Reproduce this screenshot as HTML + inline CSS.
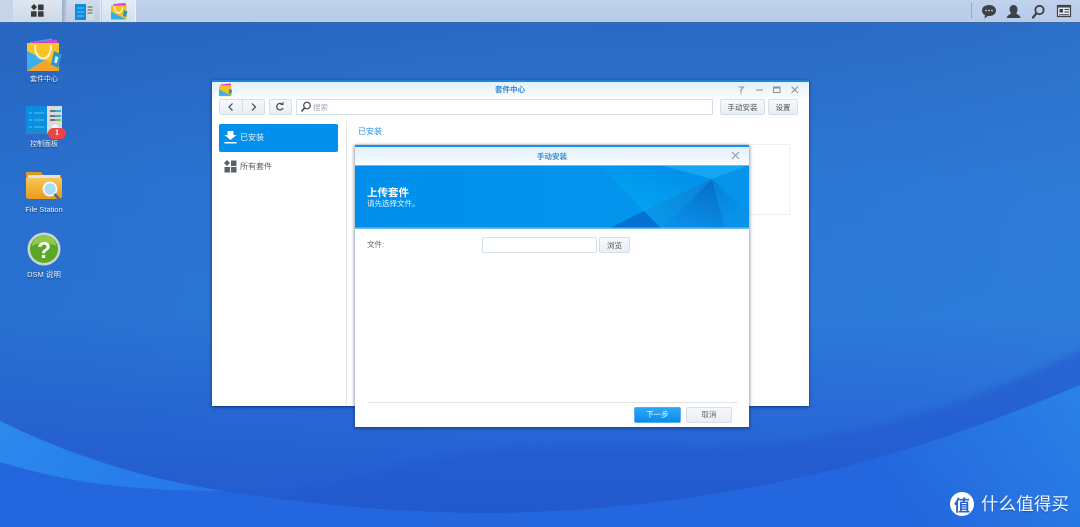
<!DOCTYPE html>
<html lang="zh"><head><meta charset="utf-8"><title>套件中心</title>
<style>
*{box-sizing:border-box}
html,body{margin:0;padding:0;width:1080px;height:527px;overflow:hidden}
body{position:relative;font-family:"Liberation Sans","Noto Sans CJK SC",sans-serif;background:#2a72d2}
.a{position:absolute}
.t{position:absolute;white-space:nowrap;line-height:1}
.c{text-align:center}
.lab{color:#eef5ff;font-size:7px;text-align:center;width:70px;left:9px;text-shadow:0 1px 1px rgba(0,30,90,.7);filter:blur(.25px)}
.btn{position:absolute;border:1px solid #d6dfe8;border-radius:2px;background:linear-gradient(#f6f9fc,#e8eef4);color:#555;font-size:7.5px;text-align:center}
.ic{filter:blur(.3px)}
</style></head><body>
<svg class="a" style="left:0;top:0" width="1080" height="527" viewBox="0 0 1080 527">
<defs>
<linearGradient id="bg" x1="0" y1="0" x2="0" y2="527" gradientUnits="userSpaceOnUse">
<stop offset="0" stop-color="#2a68c0"/><stop offset=".35" stop-color="#2c78d6"/><stop offset=".6" stop-color="#2c7ada"/><stop offset=".8" stop-color="#2868d8"/><stop offset="1" stop-color="#2258d0"/>
</linearGradient>
<linearGradient id="bgx" x1="0" y1="0" x2="1" y2="0">
<stop offset="0" stop-color="#1f58b8" stop-opacity=".28"/><stop offset=".5" stop-color="#1f58b8" stop-opacity="0"/><stop offset="1" stop-color="#3a90e0" stop-opacity=".15"/>
</linearGradient>
<linearGradient id="w1" x1="0" y1="430" x2="224" y2="490" gradientUnits="userSpaceOnUse"><stop offset="0" stop-color="#2b88ec"/><stop offset="1" stop-color="#2476ea"/></linearGradient>
<linearGradient id="w2" x1="1080" y1="385" x2="900" y2="510" gradientUnits="userSpaceOnUse"><stop offset="0" stop-color="#2a82e6"/><stop offset="1" stop-color="#2366de"/></linearGradient>
<filter id="sf" x="-5%" y="-20%" width="110%" height="140%"><feGaussianBlur stdDeviation="3"/></filter>
</defs>
<rect width="1080" height="527" fill="url(#bg)"/>
<rect width="1080" height="527" fill="url(#bgx)"/>
<path d="M300 492C360 478 440 452 517 447C640 445 740 452 815 438C890 425 990 397 1090 345V400L900 470L600 520H300Z" fill="#2358ce" opacity=".55" filter="url(#sf)"/>
<path d="M0 421C70 455 140 478 224 491C310 505 410 513 490 513C760 510 950 440 1080 385V527H0Z" fill="url(#w2)"/>
<path d="M0 421C70 455 140 478 224 491C120 491 60 480 0 462Z" fill="url(#w1)"/>
</svg>

<!-- taskbar -->
<div class="a" style="left:0;top:0;width:1080px;height:23px;background:linear-gradient(#c0d2ec,#b7cbe8);border-bottom:1px solid #3a6cab"></div>
<div class="a" style="left:0;top:0;width:13px;height:22px;background:#c6d4e8"></div>
<div class="a" style="left:13px;top:0;width:49px;height:22px;background:linear-gradient(#dfe6f0,#ccd8e9)"></div>
<div class="a" style="left:62px;top:0;width:5px;height:22px;background:linear-gradient(90deg,#97aac4,#c0d0e6)"></div>
<div class="a" style="left:67px;top:0;width:34px;height:22px;background:linear-gradient(#cfdcee,#bccde6);border-right:1px solid #e4ecf6"></div>
<div class="a" style="left:102px;top:0;width:34px;height:22px;background:linear-gradient(#e4ecf6,#d3dff0);border-right:1px solid #eef3fa"></div>
<svg class="a ic" style="left:30px;top:4px" width="15" height="14" viewBox="0 0 15 14"><path d="M4 0L7 3L4 6.200L1 3Z" fill="#333"/><rect x="8" y=".5" width="5.600" height="5.600" rx=".6" fill="#3a3a3a"/><rect x="1" y="7.200" width="5.600" height="5.600" rx=".6" fill="#3a3a3a"/><rect x="8" y="7.200" width="5.600" height="5.600" rx=".6" fill="#3a3a3a"/></svg>
<svg class="a ic" style="left:75px;top:4px" width="19" height="16" viewBox="0 0 19 16"><rect width="11" height="16" fill="#0a8fe0"/><rect x="11" width="8" height="16" fill="#d3dade"/><path d="M2 4h7M2 8h7M2 12h7" stroke="#6cc4f2"/><path d="M12.500 3h5M12.500 6h5M12.500 9h5" stroke="#49606c"/></svg>
<svg class="a ic" style="left:110px;top:3px" width="19" height="17" viewBox="0 0 36 34"><path d="M6 2L30 0L32 8H5Z" fill="#d93fd0"/><rect x="1" y="5" width="31" height="28" fill="#f4c21f"/><path d="M1 17L32 33H1Z" fill="#35aee8"/><path d="M8 7C8 24 24 24 24 7" fill="none" stroke="#fbeecb" stroke-width="2.500"/><path d="M27 14l7 3 -3 11 -6-2Z" fill="#2b93c9"/></svg>
<div class="a" style="left:971px;top:3px;width:1px;height:16px;background:#93a9c6"></div>
<svg class="a ic" style="left:981px;top:4px" width="92" height="15" viewBox="0 0 92 15">
<path d="M8 1C12.500 1 15 3.500 15 6.500S12.500 12 8 12L6.800 12L3.500 14.500L4 11.300C2 10.300 1 8.500 1 6.500C1 3.500 3.500 1 8 1Z" fill="#3c4247"/><circle cx="5" cy="6.500" r=".9" fill="#c0d2ec"/><circle cx="8" cy="6.500" r=".9" fill="#c0d2ec"/><circle cx="11" cy="6.500" r=".9" fill="#c0d2ec"/>
<path d="M32.500 1C35 1 36.500 3 36.500 5.500C36.500 7.500 35.500 8.500 35.500 9.500C35.500 10.500 39 10.800 39.500 13.500V14H25.800V13.500C26.300 10.800 29.800 10.500 29.800 9.500C29.800 8.500 28.600 7.500 28.600 5.500C28.600 3 30 1 32.500 1Z" fill="#3c4247"/>
<circle cx="58.500" cy="6" r="4.200" fill="none" stroke="#3c4247" stroke-width="1.800"/><path d="M55.300 9.500L52 13.500" stroke="#3c4247" stroke-width="2.200" stroke-linecap="round"/>
<rect x="76.500" y="1.500" width="13" height="11" fill="#e2e9f2" stroke="#3c4247" stroke-width="1.200"/><rect x="76.500" y="1.500" width="13" height="2" fill="#3c4247"/><rect x="78.500" y="5" width="3.500" height="3.500" fill="#3c4247"/><path d="M83.500 5.500h4.500M83.500 8h4.500M78 10.800h10" stroke="#3c4247" stroke-width="1"/>
</svg>

<!-- desktop icons -->
<svg class="a ic" style="left:27px;top:37px" width="36" height="35" viewBox="0 0 36 35">
<path d="M3 5L25 1.500L26 6H3Z" fill="#33b6de"/><path d="M5 5L30 2.500L31 7H5Z" fill="#de3bd6"/>
<rect x="0" y="6" width="32" height="28" fill="#f6c521"/><path d="M0 14L32 30V34H0Z" fill="#40aeea"/><path d="M0 34H32V30L18 23Z" fill="#f2a52a"/>
<path d="M8 8C7.500 26 24.500 26 24 8" fill="none" stroke="#fbeccb" stroke-width="2.200"/>
<path d="M27 14L35 17.500L31 31L24 27.500Z" fill="#2b95cc"/><path d="M28.500 19L31.500 20.300L29.500 26.500L27.200 25.400Z" fill="#d9eef8"/>
</svg>
<div class="t lab" style="top:75.500px">套件中心</div>
<svg class="a ic" style="left:26px;top:105px" width="37" height="31" viewBox="0 0 37 31">
<rect x="0" y="1" width="36" height="28" fill="#d6dbdf"/><rect x="0" y="1" width="21" height="28" fill="#0a8fe0"/><rect y="27" width="36" height="2" fill="#5b7b92" opacity=".6"/>
<path d="M3 8h3M8 8h10M3 15h3M8 15h10M3 22h3M8 22h10" stroke="#5cc3f3"/><path d="M24 6h5M24 11h5M24 15h5" stroke="#45565f" stroke-width="1.500"/><path d="M29 6h6M29 11h6" stroke="#20b4ee" stroke-width="2"/><path d="M29 15h6" stroke="#7ac143" stroke-width="2"/><circle cx="29" cy="23" r="3.500" fill="#f7f7f7"/>
</svg>
<div class="a" style="left:48px;top:128px;width:18px;height:10.500px;border-radius:6px;background:#ee4445;color:#fff;font:bold 8px/10.500px 'Liberation Serif',serif;text-align:center">1</div>
<div class="t lab" style="top:141px">控制面板</div>
<svg class="a ic" style="left:25px;top:170px" width="38" height="32" viewBox="0 0 38 32">
<defs><linearGradient id="fo" x1="0" y1="0" x2="0" y2="1"><stop offset="0" stop-color="#f8c655"/><stop offset="1" stop-color="#e79a1f"/></linearGradient></defs>
<path d="M1 2H16L18 5H36V27H1Z" fill="#d89a20"/><rect x="3" y="5" width="32" height="3" fill="#dfe5e6"/>
<path d="M1 8H37V26Q37 29 34 29H4Q1 29 1 26Z" fill="url(#fo)"/><circle cx="25" cy="19" r="6.500" fill="#a6dcfa" stroke="#f4f8fb" stroke-width="1.800"/><path d="M29.500 24L35 30" stroke="#2f6f99" stroke-width="2.400"/>
</svg>
<div class="t lab" style="top:206px;font-size:7.500px">File Station</div>
<svg class="a ic" style="left:27px;top:232px" width="34" height="34" viewBox="0 0 34 34">
<circle cx="17" cy="17" r="16.500" fill="#ccd5d0"/><circle cx="17" cy="17" r="14" fill="#5ba829"/><path d="M5 14A12 11 0 0 1 29 14C22 10 12 10 5 14Z" fill="#8ecb4c"/>
<text x="17" y="26" text-anchor="middle" font-family="Liberation Sans" font-weight="bold" font-size="23" fill="#fff">?</text>
</svg>
<div class="t lab" style="top:271px;font-size:7.500px">DSM 说明</div>

<!-- main window -->
<div class="a" style="left:212px;top:80px;width:597px;height:326px;background:#fff;border-top:2px solid #1d84d8;box-shadow:0 1px 3px rgba(0,20,70,.65)"></div>
<div class="a" style="left:212px;top:82px;width:597px;height:17px;background:linear-gradient(#e2f0fb,#fafcfe)"></div>
<svg class="a ic" style="left:219px;top:83px" width="14" height="14" viewBox="0 0 36 34"><path d="M5 3L30 0L31 8H5Z" fill="#d93fd0"/><rect x="0" y="5" width="32" height="28" fill="#f4c21f"/><path d="M0 15L32 32H0Z" fill="#3caeea"/><path d="M26 14l8 3-3 12-6-3Z" fill="#2b93c9"/></svg>
<div class="t c" style="left:460px;top:86px;width:100px;font-size:7.500px;font-weight:bold;color:#2a86d6">套件中心</div>
<svg class="a ic" style="left:736px;top:84px" width="66" height="12" viewBox="0 0 66 12" fill="none" stroke="#8b949b" stroke-width="1.100"><path d="M2.500 3H7.500L5 6V8.500M5 9.500V10.500"/><path d="M20 6H27"/><rect x="37.500" y="3" width="6.500" height="5.500"/><path d="M37.500 4H44"/><path d="M55.500 2.500L62 9M62 2.500L55.500 9"/></svg>
<!-- toolbar -->
<div class="btn" style="left:219px;top:99px;width:46px;height:16px"></div>
<div class="a" style="left:242px;top:100px;width:1px;height:14px;background:#d6dfe8"></div>
<div class="btn" style="left:269px;top:99px;width:23px;height:16px"></div>
<svg class="a ic" style="left:219px;top:99px" width="74" height="16" viewBox="0 0 74 16" fill="none" stroke="#444" stroke-width="1.200"><path d="M13.500 4.500L10 8L13.500 11.500M33 4.500L36.500 8L33 11.500"/><path d="M63.500 5.500A3.300 3.300 0 1 0 64 9"/><path d="M61.500 5.500H64V3" stroke-width="1"/></svg>
<div class="a" style="left:296px;top:99px;width:417px;height:16px;border:1px solid #d6dfe8;background:#fff;border-radius:1px"></div>
<svg class="a ic" style="left:300px;top:101px" width="12" height="12" viewBox="0 0 12 12" fill="none" stroke="#444"><circle cx="7" cy="4.500" r="3.300" stroke-width="1.200"/><path d="M4.500 7L1.500 10.500" stroke-width="1.600"/></svg>
<div class="t" style="left:313px;top:103.500px;font-size:7.500px;color:#a5acb3">搜索</div>
<div class="btn" style="left:720px;top:99px;width:45px;height:16px;line-height:15px">手动安装</div>
<div class="btn" style="left:768px;top:99px;width:30px;height:16px;line-height:15px">设置</div>
<!-- sidebar -->
<div class="a" style="left:346px;top:121px;width:1px;height:284px;background:#e4e7ea"></div>
<div class="a" style="left:219px;top:124px;width:119px;height:28px;border-radius:2px;background:#0290ec"></div>
<svg class="a ic" style="left:224px;top:131px" width="13" height="14" viewBox="0 0 13 14" fill="#fff"><path d="M3.500 0H9.500V4H12.500L6.500 9L.5 4H3.500Z"/><rect x=".5" y="11" width="12" height="1.500"/></svg>
<div class="t" style="left:240px;top:134px;font-size:8px;color:#e8f5fe">已安装</div>
<svg class="a ic" style="left:224px;top:160px" width="13" height="13" viewBox="0 0 13 13" fill="#58626a"><path d="M3 0L6 3L3 6L0 3Z"/><rect x="7" y=".5" width="5.500" height="5.500"/><rect x=".5" y="7" width="5.500" height="5.500"/><rect x="7" y="7" width="5.500" height="5.500"/></svg>
<div class="t" style="left:240px;top:162.500px;font-size:8px;color:#555e66">所有套件</div>
<div class="t" style="left:358px;top:127.500px;font-size:8px;color:#2a8fe0">已安装</div>
<div class="a" style="left:355px;top:144px;width:435px;height:71px;border:1px solid #eef0f2"></div>

<!-- dialog -->
<div class="a" style="left:355px;top:145px;width:394px;height:282px;background:#fff;border-top:2px solid #1a90ea;box-shadow:0 1px 3px 1px rgba(10,30,70,.42)"></div>
<div class="a" style="left:355px;top:147px;width:394px;height:18px;background:linear-gradient(#e0effb,#fafcfe)"></div>
<div class="t c" style="left:502px;top:152.500px;width:100px;font-size:7.500px;font-weight:bold;color:#3a8fd2">手动安装</div>
<svg class="a" style="left:731px;top:151px" width="9" height="9" viewBox="0 0 9 9"><path d="M1 1L8 8M8 1L1 8" stroke="#8d969d" stroke-width="1"/></svg>
<svg class="a" style="left:355px;top:165px" width="394" height="64" viewBox="355 165 394 64">
<defs>
<linearGradient id="b1" x1="0" y1="0" x2="1" y2="0"><stop offset="0" stop-color="#018eec"/><stop offset="1" stop-color="#0298ee"/></linearGradient>
<linearGradient id="b2" x1="660" y1="165" x2="644" y2="211" gradientUnits="userSpaceOnUse"><stop offset="0" stop-color="#0190ec"/><stop offset="1" stop-color="#02a4ee"/></linearGradient>
<linearGradient id="b3" x1="712" y1="179" x2="694" y2="229" gradientUnits="userSpaceOnUse"><stop offset="0" stop-color="#056ec6"/><stop offset="1" stop-color="#0a8ee6"/></linearGradient>
<linearGradient id="b4" x1="712" y1="179" x2="740" y2="222" gradientUnits="userSpaceOnUse"><stop offset="0" stop-color="#0680d8"/><stop offset="1" stop-color="#0a94ec"/></linearGradient>
<linearGradient id="b5" x1="712" y1="179" x2="650" y2="220" gradientUnits="userSpaceOnUse"><stop offset="0" stop-color="#0a80d6"/><stop offset="1" stop-color="#0a98e8"/></linearGradient>
</defs>
<rect x="355" y="165" width="394" height="64" fill="url(#b1)"/>
<path d="M600 165H660L712 179L644 211Z" fill="url(#b2)"/>
<path d="M660 165H749L712 179Z" fill="#14a6f2"/>
<path d="M712 179L749 165V215Z" fill="#0594ea"/>
<path d="M644 211L712 179L662 229Z" fill="url(#b5)"/>
<path d="M662 229L712 179L725 229Z" fill="url(#b3)"/>
<path d="M712 179L749 215L725 229Z" fill="url(#b4)"/>
<path d="M725 229L749 215V229Z" fill="#0992e8"/>
<path d="M608 229L644 211L662 229Z" fill="#0470cf"/>
<rect x="355" y="227.500" width="394" height="1.500" fill="#6dbdf2"/>
<rect x="355" y="165" width="394" height="1" fill="#6dbdf2"/>
</svg>
<div class="t" style="left:367px;top:187.500px;font-size:10.500px;font-weight:bold;color:#fff">上传套件</div>
<div class="t" style="left:367px;top:199.500px;font-size:7.500px;color:#e6f4fd">请先选择文件。</div>
<div class="t" style="left:367px;top:240.500px;font-size:7.500px;color:#5d666d">文件:</div>
<div class="a" style="left:482px;top:237px;width:115px;height:16px;border:1px solid #d6e0ea;background:#fff;border-radius:1px"></div>
<div class="btn" style="left:599px;top:237px;width:31px;height:16px;line-height:15px">浏览</div>
<div class="a" style="left:367px;top:401.500px;width:371px;height:1px;background:#e2e4e6"></div>
<div class="a" style="left:634px;top:407px;width:47px;height:16px;border-radius:2px;background:linear-gradient(#2ea6f6,#0a8cea);border:1px solid #53b2ee;color:#fff;font-size:7.500px;line-height:14px;text-align:center">下一步</div>
<div class="btn" style="left:686px;top:407px;width:46px;height:16px;line-height:14px;color:#666">取消</div>

<!-- watermark -->
<div class="a" style="left:950px;top:492px;width:24px;height:24px;border-radius:50%;background:#fff;color:#2463c8;font:bold 16px/24px 'Noto Sans CJK SC',sans-serif;text-align:center">值</div>
<div class="t" style="left:981px;top:495px;font-size:17.500px;letter-spacing:.1px;color:#f2f7ff;font-family:'Noto Sans CJK SC',sans-serif;text-shadow:0 1px 1px rgba(0,30,90,.35)">什么值得买</div>
</body></html>
